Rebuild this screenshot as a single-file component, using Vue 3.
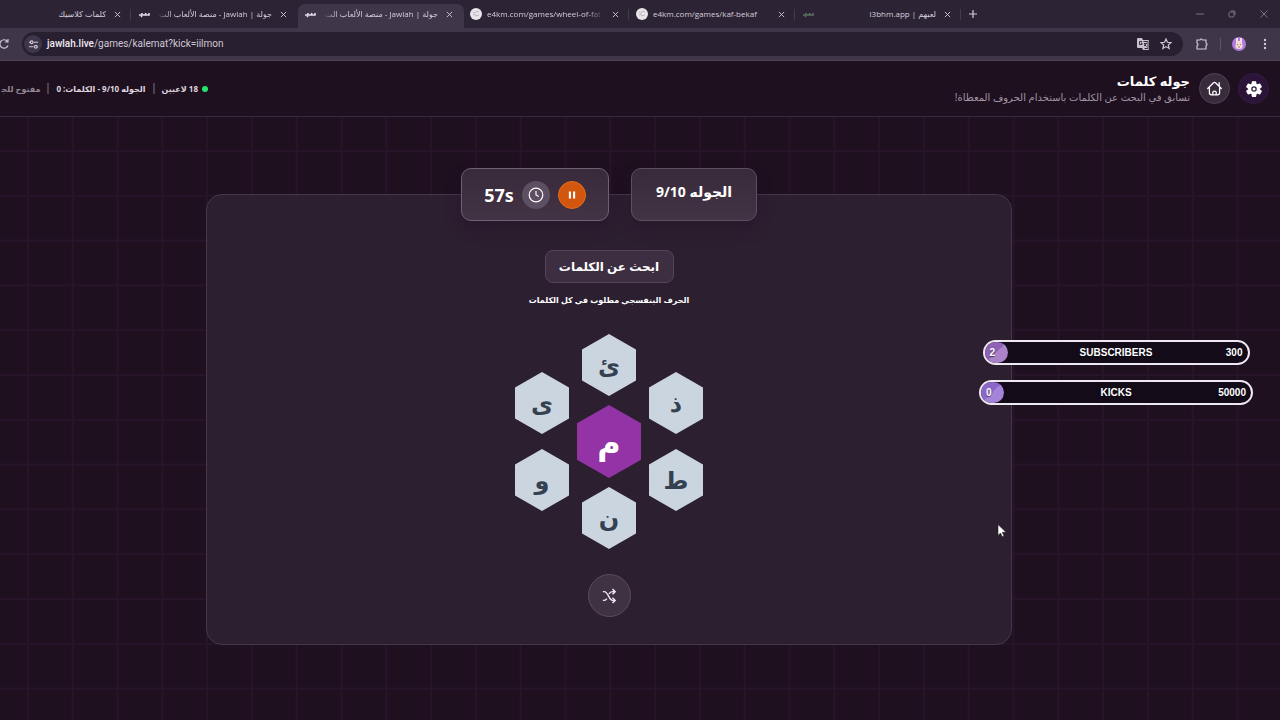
<script setup>
const tabs = [
  { title: 'كلمات كلاسيك', icon: '', rtl: true, first: true },
  { title: 'جولة | Jawlah - منصة الألعاب الت', icon: 'jawlah', rtl: true, fade: true },
  { title: 'جولة | Jawlah - منصة الألعاب الت', icon: 'jawlah', rtl: true, fade: true, active: true },
  { title: 'e4km.com/games/wheel-of-fat', icon: 'ball', fade: true },
  { title: 'e4km.com/games/kaf-bekaf', icon: 'ball' },
  { title: 'لعبهم | l3bhm.app', icon: 'dim', rtl: true }
]
const columns = [['ى', 'و'], ['ئ', 'م', 'ن'], ['ذ', 'ط']]
const goals = [
  { label: 'SUBSCRIBERS', value: 2, target: 300 },
  { label: 'KICKS', value: 0, target: 50000, wide: true }
]
</script>

<template>
  <div class="window">
    <nav class="tabs" aria-label="Tabs">
      <div v-for="(t, i) in tabs" :key="i" class="tab" :class="{ first: t.first, active: t.active, plain: tabs[i + 1]?.active }">
        <span v-if="t.icon === 'ball'" class="ball">
          <svg viewBox="0 0 12 12"><circle cx="6" cy="6" r="6" fill="#e8e5e8" /><path d="M3 4l2 1 2-2 2 1M3 7l2-1 1 2 3-1" stroke="#bdb7be" fill="none" /></svg>
        </span>
        <span v-else-if="t.icon" class="mark" :class="t.icon">
          <svg viewBox="0 0 12 8"><path d="M1 5h3V3M4 5h3l1-2M7 5h4V3M3 7l1-1" stroke="currentColor" stroke-width="1.6" fill="none" /></svg>
        </span>
        <span class="title" :class="{ fade: t.fade, rtl: t.rtl }" :dir="t.rtl ? 'rtl' : 'ltr'">{{ t.title }}</span>
        <button class="close" aria-label="Close tab"><svg viewBox="0 0 8 8"><path d="M1 1l6 6M7 1L1 7" /></svg></button>
      </div>
      <button class="new" aria-label="New tab"><svg viewBox="0 0 8 8"><path d="M4 0v8M0 4h8" /></svg></button>
      <div class="controls">
        <button aria-label="Minimize"><svg viewBox="0 0 8 8"><path d="M0 4h8" /></svg></button>
        <button aria-label="Restore"><svg viewBox="0 0 8 8"><rect x="1" y="2" width="5" height="5" rx="1" /><path d="M3 1h3q1 0 1 1v3" /></svg></button>
        <button aria-label="Close window"><svg viewBox="0 0 8 8"><path d="M0.500 0.500l7 7M7.500 0.500l-7 7" /></svg></button>
      </div>
    </nav>

    <div class="toolbar">
      <button class="reload" aria-label="Reload"><svg viewBox="0 0 12 12"><path d="M10 7.500A4.200 4.200 0 1 1 9.500 3.500M10 1v3H7" /></svg></button>
      <div class="address">
        <button class="site" aria-label="Site information">
          <svg viewBox="0 0 12 12"><path d="M1 3.500h2M6 3.500h5M1 8.500h5M10 8.500h1" /><circle cx="4" cy="3.500" r="1.500" /><circle cx="8.500" cy="8.500" r="1.500" /></svg>
        </button>
        <div class="url"><b>jawlah.live</b>/games/kalemat?kick=iilmon</div>
        <button aria-label="Translate"><svg viewBox="0 0 12 12"><path class="solid" d="M1 0h4l1 2h5q1 0 1 1v8q0 1-1 1H6L5 10H1Q0 10 0 9V1Q0 0 1 0z" /><path class="cut" d="M6.500 3.500H11v7H7.500M5 3.500H2.500v3H5V5H4M7 5.500h3M9 5.500Q8 7.500 7 8M7.500 6.500L9.500 8.500" /></svg></button>
        <button aria-label="Bookmark"><svg viewBox="0 0 12 12"><path d="M6 1l1.400 3.300 3.600.3-2.700 2.400.8 3.500L6 8.600l-3.100 1.900.8-3.500L1 4.600l3.600-.3z" /></svg></button>
      </div>
      <button class="puzzle" aria-label="Extensions"><svg viewBox="0 0 12 12"><path d="M1 2h3q1-2 2.500 0H10v3q2 1 0 3v3H1V8q2-1.500 0-3z" /></svg></button>
      <i class="bar"></i>
      <button class="avatar" aria-label="Profile"><svg viewBox="0 0 14 14"><circle cx="7" cy="7" r="7" fill="#b07be0" /><path d="M4 6V1h2v3h2V1h2v5q2 6-3 6T4 6z" fill="#f3dcd8" /><path d="M5.500 7v1M8.500 7v1M6 10h2" stroke="#b5744c" /></svg></button>
      <button class="menu" aria-label="Menu"><svg viewBox="0 0 12 12"><circle cx="6" cy="2" r="1.200" /><circle cx="6" cy="6" r="1.200" /><circle cx="6" cy="10" r="1.200" /></svg></button>
    </div>

    <div class="page" dir="rtl">
      <header class="header">
        <button class="round settings" aria-label="الإعدادات">
          <svg viewBox="0 0 20 20"><path fill="#fff" stroke="#fff" stroke-width="1.500" stroke-linejoin="round" d="M8.300 2h3.400l.5 2.800 1.400.8 2.700-1 1.700 3-2.200 1.800v1.200l2.200 1.800-1.700 3-2.700-1-1.400.8-.5 2.800H8.300l-.5-2.800-1.400-.8-2.700 1-1.700-3 2.200-1.800V9.400L2 7.600l1.700-3 2.700 1 1.400-.8z" /><circle cx="10" cy="10" r="2.400" fill="#fff" stroke="#32183d" stroke-width="1.400" /></svg>
        </button>
        <a class="round home" href="#" aria-label="الرئيسية">
          <svg viewBox="0 0 20 20"><path d="M2 10l6.500-6.500q1.500-1.300 3 0L18 10M4 8.500V15q0 2.500 2.500 2.500h7Q16 17.500 16 15V8.500M8 17v-2.500q0-1.500 2-1.500t2 1.500V17M15.500 3v4" /></svg>
        </a>
        <div class="heading">
          <h1>جوله كلمات</h1>
          <p>تسابق في البحث عن الكلمات باستخدام الحروف المعطاة!</p>
        </div>
        <div class="status">
          <i class="dot"></i>
          <span>18 لاعبين</span>
          <i class="rule"></i>
          <span>الجوله 9/10 - الكلمات: 0</span>
          <i class="rule"></i>
          <span class="muted">مفتوح للج&zwj;</span>
        </div>
      </header>

      <main class="main" dir="ltr">
        <section class="game">
          <div class="badges">
            <div class="badge timer">
              <strong>57s</strong>
              <span class="chip"><svg viewBox="0 0 20 20"><circle cx="10" cy="10" r="8.500" /><path d="M10 5v5l3.500 2" /></svg></span>
              <button class="chip pause" aria-label="إيقاف مؤقت"><svg viewBox="0 0 20 20"><path d="M7 5v10M13 5v10" /></svg></button>
            </div>
            <div class="badge round-no" dir="rtl">الجوله 9/10</div>
          </div>
          <div class="panel">
            <h2 dir="rtl">ابحث عن الكلمات</h2>
            <p dir="rtl">الحرف البنفسجي مطلوب في كل الكلمات</p>
            <div class="board">
              <div v-for="(col, c) in columns" :key="c" class="col">
                <button v-for="l in col" :key="l" class="hex" :class="{ center: l === 'م' }">{{ l }}</button>
              </div>
            </div>
            <button class="shuffle" aria-label="خلط الحروف">
              <svg viewBox="0 0 16 16"><path d="M1 3h1.500C7 3 8 13 12 13h3M12 10l3 3-3 3M1 13h1.500q2 0 3-2M8 5.500Q9.500 3 12 3h3M12 0l3 3-3 3" /></svg>
            </button>
          </div>
        </section>
      </main>
    </div>

    <aside class="goals">
      <div v-for="g in goals" :key="g.label" class="goal" :class="{ wide: g.wide }">
        <i class="fill"></i>
        <span>{{ g.value }}</span><span>{{ g.label }}</span><span class="target">{{ g.target }}</span>
      </div>
    </aside>
    <svg class="cursor" viewBox="0 0 10 14"><path d="M1 1v11l2.500-2.500 1.800 3.700 1.700-.8-1.700-3.600H9z" fill="#fff" stroke="#222" stroke-width=".6" /></svg>
  </div>
</template>

<style>
body { background: #1f1020; }
</style>

<style scoped>
* { box-sizing: border-box; }
button { border: 0; padding: 0; background: none; color: inherit; font: inherit; display: flex; align-items: center; justify-content: center; }
svg { display: block; fill: none; stroke: currentColor; overflow: visible; }
h1, h2, p { margin: 0; }
.window { position: relative; min-height: 100vh; display: flex; flex-direction: column; overflow: hidden; background: #1f1020; color: #fff; font-family: "Noto Sans", "DejaVu Sans", sans-serif; }

.tabs { display: flex; height: 28px; background: #2c2434; color: #d6cdda; font-family: "Open Sans", "DejaVu Sans", sans-serif; font-size: 8px; }
.tab { position: relative; display: flex; align-items: center; flex: 0 1 166px; min-width: 0; padding: 0 9px 0 6px; gap: 5px; }
.tab.first { flex-basis: 132px; }
.tab::after { content: ""; position: absolute; right: 1px; top: 9px; width: 1px; height: 11px; background: #433a4b; }
.tab.active::after, .tab.plain::after { display: none; }
.tab.active { background: #40364a; border-radius: 7px 7px 0 0; margin-top: 4px; padding-bottom: 4px; }
.ball svg { width: 12px; height: 12px; stroke: none; }
.mark svg { width: 12px; height: 8px; }
.mark { color: #e5dbea; }
.mark.dim { color: #66806f; opacity: .8; }
.title { flex: 1; min-width: 0; overflow: hidden; white-space: nowrap; line-height: 16px; }
.fade { mask-image: linear-gradient(to right, #000 85%, transparent); }
.fade.rtl { mask-image: linear-gradient(to left, #000 85%, transparent); }
.close { width: 12px; height: 12px; }
.close svg { width: 7px; height: 7px; }
.new { width: 22px; }
.new svg { width: 8px; height: 8px; stroke-width: 1.200; }
.controls { display: flex; gap: 24px; margin-left: auto; padding-right: 12px; color: #8e8595; }
.controls svg { width: 8px; height: 8px; stroke-width: .8; }

.toolbar { display: flex; align-items: center; height: 33px; background: #40364a; border-bottom: 1px solid #4b4254; padding-right: 9px; color: #d1c8d6; }
.toolbar svg { width: 12px; height: 12px; stroke-width: 1.200; }
.reload { width: 22px; height: 22px; padding-right: 14px; }
.reload svg { flex: none; }
.address { flex: 1; display: flex; align-items: center; gap: 11px; height: 24px; padding: 0 11px 0 2px; border-radius: 12px; background: #281f30; }
.site { width: 18px; height: 18px; border-radius: 50%; background: #40364a; }
.site svg { width: 11px; height: 11px; }
.url { flex: 1; margin-left: -6px; font-family: Roboto, sans-serif; font-size: 10px; line-height: 16px; color: #cfc7d4; }
.url b { font-weight: 500; color: #f1ecf4; }
.solid { fill: #c9c0ce; stroke: none; }
.cut { stroke: #281f30; stroke-width: .9; }
.puzzle { margin-left: 13px; }
.bar { width: 1px; height: 12px; background: #5d5367; margin: 0 11px 0 12px; }
.avatar svg { width: 14px; height: 14px; stroke: none; }
.menu { margin-left: 13px; }
.menu svg { fill: #d1c8d6; stroke: none; }

.page { flex: 1; display: flex; flex-direction: column; }
.header { display: flex; align-items: center; height: 56px; padding: 0 11px 0 0; border-bottom: 1px solid #382a3a; background: #1f1020; }
.round { display: flex; align-items: center; justify-content: center; flex: none; width: 31px; height: 31px; border-radius: 50%; color: #fff; }
.settings { background: #2b1438; border: 1px solid #351b43; }
.settings svg { width: 18px; height: 18px; stroke: none; }
.home { margin-right: 8px; background: #382c3c; border: 1px solid #50434f; }
.home svg { width: 17px; height: 17px; stroke-width: 1.500; stroke-linecap: round; stroke-linejoin: round; }
.heading { margin-right: 9px; white-space: nowrap; }
.heading h1 { font-size: 13px; line-height: 18px; font-weight: 800; }
.heading p { font-size: 10px; line-height: 15px; color: #a095a2; }
.status { display: flex; align-items: center; gap: 7px; width: 208px; margin-right: auto; overflow: hidden; white-space: nowrap; font-size: 8px; line-height: 16px; font-weight: 700; color: #ded6df; }
.status > * { flex: none; }
.dot { width: 6px; height: 6px; border-radius: 50%; background: #22e66c; margin-left: -3px; }
.rule { width: 2px; height: 11px; background: #4c3f4e; }
.muted { color: #918592; }

.main { flex: 1; display: grid; grid-template-columns: 206fr 806fr 268fr; align-items: start; padding: 51px 0;
  background-image: linear-gradient(to right, #27142a 2px, transparent 2px), linear-gradient(#27142a 2px, transparent 2px);
  background-size: 3.5vw 3.5vw; background-position: 27px 33px; }
.game { grid-column: 2; display: flex; flex-direction: column; }
.badges { position: relative; z-index: 1; display: flex; justify-content: center; gap: 22px; margin-bottom: -27px; }
.badge { height: 53px; border-radius: 10px; border: 1px solid #5c4f60; background: linear-gradient(#382a3b, #433445); box-shadow: 0 8px 16px #1f102055; display: flex; align-items: center; justify-content: center; }
.timer { width: 148px; gap: 8px; border-color: #6d6173; }
.timer strong { font-size: 18px; line-height: 24px; }
.chip { width: 28px; height: 28px; border-radius: 50%; background: #5c4f61; display: flex; align-items: center; justify-content: center; }
.chip svg { width: 16px; height: 16px; stroke-width: 1.500; }
.pause { background: #d3560e; border: 1px solid #e46c18; }
.pause svg { width: 14px; height: 14px; stroke-width: 3; }
.round-no { width: 126px; padding-bottom: 6px; font-size: 14px; font-weight: 700; }
.panel { display: flex; flex-direction: column; align-items: center; padding: 55px 0 27px; border: 1px solid #44374a; border-radius: 16px; background: #2c1f30; }
.panel h2 { display: flex; align-items: center; justify-content: center; width: 129px; height: 33px; border: 1px solid #54465a; border-radius: 8px; background: #3d2f41; font-size: 12px; white-space: nowrap; }
.panel p { margin-top: 9px; font-size: 8px; line-height: 16px; font-weight: 700; }
.board { display: flex; align-items: center; gap: 8px; margin-top: 26px; }
.col { display: flex; flex-direction: column; align-items: center; gap: 15px; }
.col:nth-child(2) { gap: 9px; }
.hex { width: 54px; height: 62px; clip-path: polygon(50% 0, 100% 25%, 100% 75%, 50% 100%, 0 75%, 0 25%); background: #cbd5e0; color: #334150; font-size: 24px; line-height: 32px; font-weight: 700; }
.hex.center { width: 64px; height: 73px; background: #9333a6; color: #fff; font-size: 32px; }
.shuffle { width: 43px; height: 43px; margin-top: 25px; border-radius: 50%; border: 1px solid #5b4d60; background: #3f3243; color: #eee6f0; }
.shuffle svg { width: 14px; height: 14px; stroke-width: 1.700; }

.goals { position: absolute; top: 340px; right: 27px; display: flex; flex-direction: column; align-items: center; gap: 15px; font: 700 10px/16px "Liberation Sans", sans-serif; }
.goal { position: relative; display: grid; grid-template-columns: 1fr auto 1fr; align-items: center; width: 267px; height: 25px; padding: 0 5px; border: 2px solid #eee8f0; border-radius: 13px; background: #140b19; text-shadow: 0 1px 1px #0008; }
.goal.wide { width: 274px; }
.goal span { position: relative; }
.target { text-align: right; }
.fill { position: absolute; left: 0; top: 0; width: 23px; height: 21px; border-radius: 11px; background: linear-gradient(135deg, #8e62b5 50%, #aa83c9 50%); }
.goal.wide .fill { background: linear-gradient(135deg, #8c66c8 50%, #a384d8 50%); }
.cursor { position: absolute; left: 997px; top: 523px; width: 10px; height: 15px; }
</style>
